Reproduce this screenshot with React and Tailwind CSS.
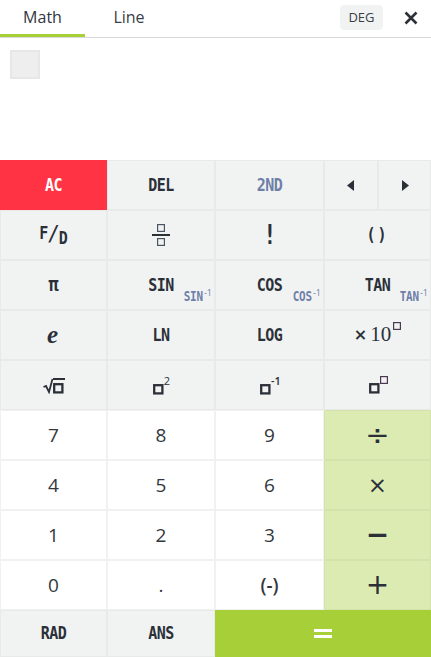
import React from "react";

const labelFont = "inline-block scale-y-[1.2] font-['DejaVu_Sans_Mono',monospace] font-bold text-[15px] tracking-[-0.5px] text-[#2b3038]";
const numFont = "font-['Open_Sans',sans-serif] text-[19px] text-[#33373d]";

// the filled "placeholder" square used in the power keys
const Box = () => (
    <svg width="11" height="11" viewBox="0 0 11 11" className="block">
        <rect x="1.2" y="1.2" width="8.2" height="8.2" fill="none" stroke="#2b3038" strokeWidth="2.3" />
    </svg>
);

const SmallBox = ({ color = "#4a5563" }) => (
    <svg width="8" height="8" viewBox="0 0 8 8" className="block">
        <rect x="0.6" y="0.6" width="6.8" height="6.8" fill="none" stroke={color} strokeWidth="1.2" />
    </svg>
);

const Key = ({ children, className = "", bg = "bg-[#f1f3f3] border-[#e8e9e9]" }) => (
    <button className={`relative h-[50px] border flex items-center justify-center ${bg} ${className}`}>
        {children}
    </button>
);

const Fn = ({ main, sub }) => (
    <Key>
        <span className={labelFont}>{main}</span>
        <span className="absolute right-[2px] bottom-[7px] flex items-start font-['DejaVu_Sans_Mono',monospace] font-bold text-[11px] leading-[10px] tracking-[-0.2px] text-[#6e7fa8]">
            <span className="inline-block scale-y-[1.2]">{sub}</span>
            <span className="font-['Open_Sans',sans-serif] font-normal tracking-normal text-[9px] leading-[8px] ml-[1px] -mt-[3px]">-1</span>
        </span>
    </Key>
);

const Num = ({ children, className = "" }) => (
    <Key bg="bg-white border-[#f1f1f1]">
        <span className={`${numFont} ${className}`}>{children}</span>
    </Key>
);

const Op = ({ children, className = "" }) => (
    <Key bg="bg-[#dcebb2] border-[#d4e2ac]">
        <span className={`font-['DejaVu_Sans',sans-serif] leading-none text-[#2b3038] ${className}`}>{children}</span>
    </Key>
);

const App = () => {
    return (
        <div className="w-[431px] h-[657px] bg-white overflow-hidden flex flex-col font-['Open_Sans',sans-serif]">
            {/* header */}
            <div className="h-[38px] flex items-stretch border-b border-[#d9d9d9]">
                <div className="w-[85px] h-[37px] flex items-center justify-center border-b-[3px] border-[#a6cf38] text-[16px] font-medium text-[#2f3640]">
                    Math
                </div>
                <div className="w-[88px] h-[37px] flex items-center justify-center border-b-[3px] border-transparent text-[16px] text-[#3a4048]">
                    Line
                </div>
                <div className="ml-auto flex items-start pt-[5px]">
                    <div className="w-[43px] h-[25px] rounded bg-[#f1f3f3] flex items-center justify-center text-[13px] text-[#3a4048]">
                        DEG
                    </div>
                    <div className="w-[48px] h-[26px] pl-[21px] flex items-center">
                        <svg width="14" height="14" viewBox="0 0 14 14">
                            <path d="M1.5 1.5 L12.5 12.5 M12.5 1.5 L1.5 12.5" stroke="#2b3038" strokeWidth="2.6" fill="none" />
                        </svg>
                    </div>
                </div>
            </div>

            {/* display */}
            <div className="h-[122px] pl-[10px] pt-[12px]">
                <div className="w-[30px] h-[29px] bg-[#eeeeee] border-2 border-[#e7e7e7]" />
            </div>

            {/* keypad */}
            <div className="grid grid-cols-[107px_108px_109px_107px]">
                <Key bg="bg-[#ff3344] border-[#ff3344]">
                    <span className={`${labelFont} !text-white`}>AC</span>
                </Key>
                <Key><span className={labelFont}>DEL</span></Key>
                <Key><span className={`${labelFont} !text-[#6e7fa8]`}>2ND</span></Key>
                <div className="grid grid-cols-2">
                    <Key>
                        <svg width="7" height="11" viewBox="0 0 7 11"><path d="M7 0 V11 L0 5.5 Z" fill="#2b3038" /></svg>
                    </Key>
                    <Key>
                        <svg width="7" height="11" viewBox="0 0 7 11" className="translate-x-[1px]"><path d="M0 0 V11 L7 5.5 Z" fill="#2b3038" /></svg>
                    </Key>
                </div>

                <Key>
                    <span className="flex items-center font-['DejaVu_Sans_Mono',monospace] font-bold text-[15px] text-[#2b3038]">
                        <span className="scale-y-[1.2] -translate-y-[2px]">F</span>
                        <span className="text-[21px] font-normal -mx-[1px]">/</span>
                        <span className="scale-y-[1.2] translate-y-[3px]">D</span>
                    </span>
                </Key>
                <Key>
                    <span className="flex flex-col items-center gap-[2px]">
                        <SmallBox />
                        <span className="w-[18px] h-[2px] bg-[#2b3038]" />
                        <SmallBox />
                    </span>
                </Key>
                <Key><span className={`${labelFont} !text-[22px]`}>!</span></Key>
                <Key><span className={`${labelFont} !tracking-[2px]`}>()</span></Key>

                <Key><span className="font-['DejaVu_Sans_Mono',monospace] font-bold text-[17px] scale-y-[1.1] text-[#2b3038]">π</span></Key>
                <Fn main="SIN" sub="SIN" />
                <Fn main="COS" sub="COS" />
                <Fn main="TAN" sub="TAN" />

                <Key><span className="font-['Liberation_Serif',serif] font-bold italic text-[25px] leading-none -translate-y-[1px] -translate-x-[1px] text-[#2b3038]">e</span></Key>
                <Key><span className={labelFont}>LN</span></Key>
                <Key><span className={labelFont}>LOG</span></Key>
                <Key>
                    <span className="flex items-center">
                        <span className="font-['DejaVu_Sans',sans-serif] font-bold text-[16px] text-[#2b3038] mr-[3px]">×</span>
                        <span className="font-['Liberation_Serif',serif] text-[21px] text-[#2b3038]">10</span>
                        <span className="-translate-y-[9px] ml-[2px]"><SmallBox color="#4a3a50" /></span>
                    </span>
                </Key>

                <Key>
                    <span className="flex items-end translate-y-[1px]">
                        <svg width="10" height="16" viewBox="0 0 10 16">
                            <path d="M0.5 9 L3 8 L6 14 L9.5 1" stroke="#2b3038" strokeWidth="1.8" fill="none" />
                        </svg>
                        <span className="border-t-2 border-[#2b3038] pt-[3px] pr-[1px]"><Box /></span>
                    </span>
                </Key>
                <Key>
                    <span className="flex items-start ml-[1px]">
                        <span className="mt-[9px]"><Box /></span>
                        <span className="text-[11px] leading-none text-[#2b3038]">2</span>
                    </span>
                </Key>
                <Key>
                    <span className="flex items-start ml-[2px]">
                        <span className="mt-[9px]"><Box /></span>
                        <span className="text-[11px] leading-none font-semibold text-[#2b3038]">-1</span>
                    </span>
                </Key>
                <Key>
                    <span className="flex items-start ml-[2px]">
                        <span className="mt-[7px]"><Box /></span>
                        <SmallBox color="#4a3a50" />
                    </span>
                </Key>

                <Num>7</Num>
                <Num>8</Num>
                <Num>9</Num>
                <Op className="text-[29px]">÷</Op>
                <Num>4</Num>
                <Num>5</Num>
                <Num>6</Num>
                <Op className="text-[23px]">×</Op>
                <Num>1</Num>
                <Num>2</Num>
                <Num>3</Num>
                <Op className="text-[28px] font-bold">−</Op>
                <Num>0</Num>
                <Num>.</Num>
                <Num className="font-semibold">(-)</Num>
                <Op className="text-[28px]">+</Op>

                <Key className="!h-[47px]"><span className={labelFont}>RAD</span></Key>
                <Key className="!h-[47px]"><span className={labelFont}>ANS</span></Key>
                <Key className="!h-[47px] col-span-2" bg="bg-[#a6cf38] border-[#a6cf38]">
                    <span className="flex flex-col gap-[3px]">
                        <span className="w-[18px] h-[3px] bg-white" />
                        <span className="w-[18px] h-[3px] bg-white" />
                    </span>
                </Key>
            </div>
        </div>
    );
};

export default App;
